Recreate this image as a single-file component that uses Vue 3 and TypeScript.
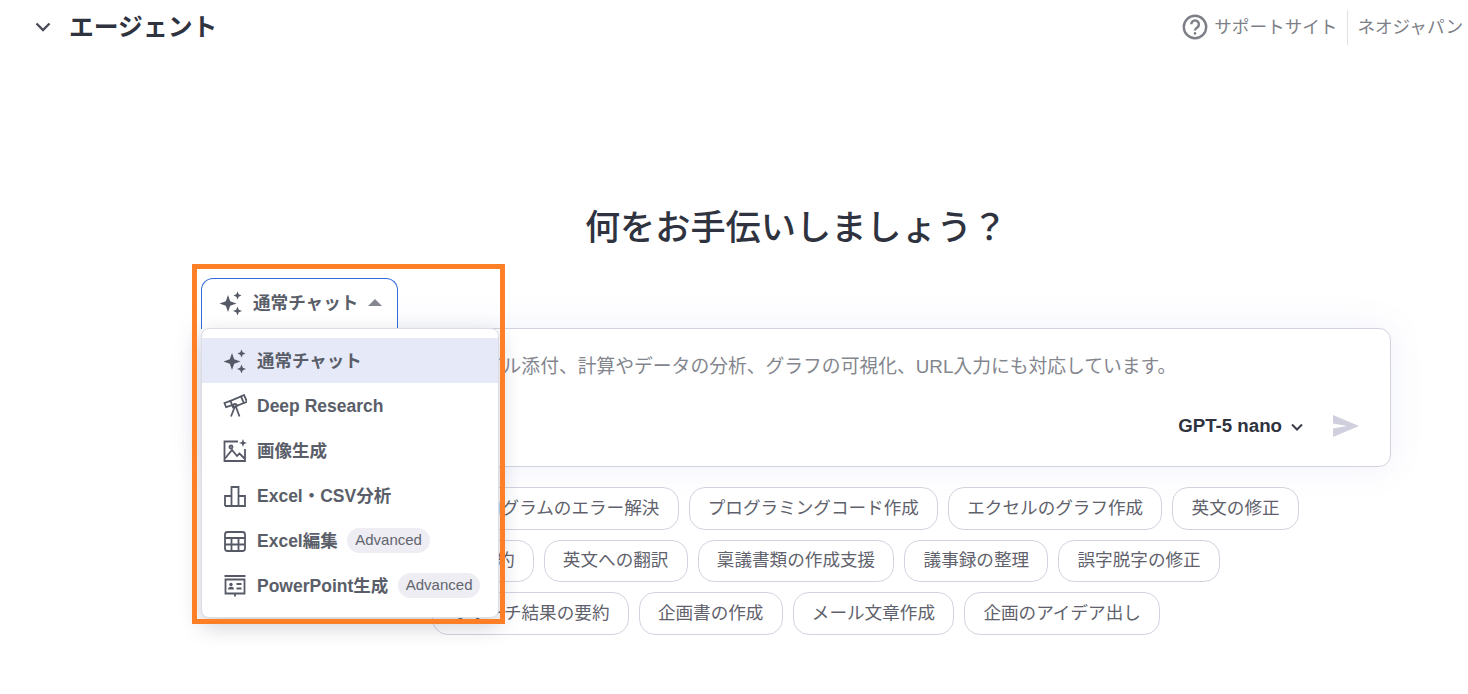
<script setup lang="ts">
const rows: string[][] = [
  ['メール返信案', 'プログラムのエラー解決', 'プログラミングコード作成', 'エクセルのグラフ作成', '英文の修正'],
  ['長文の文章要約', '英文への翻訳', '稟議書類の作成支援', '議事録の整理', '誤字脱字の修正'],
  ['リサーチ結果の要約', '企画書の作成', 'メール文章作成', '企画のアイデア出し'],
]
</script>

<template>
  <div class="page">
    <header class="top">
      <div class="top-left">
        <svg class="chev" viewBox="0 0 16 16"><path d="M1.500 4.500 8 11 14.500 4.500" /></svg>
        <h1>エージェント</h1>
      </div>
      <div class="top-right">
        <svg class="help" viewBox="0 0 26 26">
          <circle cx="13" cy="13" r="11.200" />
          <path d="M9.300 10.300a3.800 3.800 0 1 1 5.900 3.100c-1.300.9-2.200 1.500-2.200 3" />
          <circle class="dot" cx="13" cy="19.400" r="1.300" />
        </svg>
        <span class="link">サポートサイト</span>
        <span class="divider"></span>
        <span class="link company">ネオジャパン</span>
      </div>
    </header>

    <main class="main">
      <h2>何をお手伝いしましょう？</h2>

      <div class="composer">
        <button class="tab">
          <svg class="ic" viewBox="0 0 24 24"><path class="fill" d="M9 4 11.200 10.300 17.500 12.500 11.200 14.700 9 21 6.800 14.700 .5 12.500 6.800 10.300ZM18.500 0.500 19.700 3.300 22.500 4.500 19.700 5.700 18.500 8.500 17.300 5.700 14.500 4.500 17.300 3.300ZM18.500 15.500 19.800 18.700 23 20 19.800 21.300 18.500 24.500 17.200 21.300 14 20 17.200 18.700Z" /></svg>
          <span>通常チャット</span>
          <span class="caret"></span>
        </button>

        <div class="card">
          <p class="placeholder">質問を入力してください。ファイル添付、計算やデータの分析、グラフの可視化、URL入力にも対応しています。</p>
          <div class="card-foot">
            <span class="model">GPT-5 nano</span>
            <svg class="model-chev" viewBox="0 0 16 16"><path d="M3 5.500 8 10.500 13 5.500" /></svg>
            <svg class="send" viewBox="0 0 28 24"><path d="M1 1 27 12 1 23 1 14.500 15 12 1 9.500Z" /></svg>
          </div>
        </div>

        <div class="chips">
          <div v-for="(row, i) in rows" :key="i" class="chip-row">
            <span v-for="chip in row" :key="chip" class="chip">{{ chip }}</span>
          </div>
        </div>

        <div class="menu">
          <div class="item active">
            <svg class="ic" viewBox="0 0 24 24"><path class="fill" d="M9 4 11.200 10.300 17.500 12.500 11.200 14.700 9 21 6.800 14.700 .5 12.500 6.800 10.300ZM18.500 0.500 19.700 3.300 22.500 4.500 19.700 5.700 18.500 8.500 17.300 5.700 14.500 4.500 17.300 3.300ZM18.500 15.500 19.800 18.700 23 20 19.800 21.300 18.500 24.500 17.200 21.300 14 20 17.200 18.700Z" /></svg>
            <span>通常チャット</span>
          </div>
          <div class="item">
            <svg class="ic line" viewBox="0 0 24 24">
              <path d="M7.500 6.800 18 2.500l2.800 6.500-10.800 4.300Z" />
              <path d="M18 2.500 21 1l3 6.800-3.200 1.200" />
              <path d="M7.500 6.800 1.500 9l1.600 4.200 6.900-2.300" />
              <path d="M11.500 13.500 8 22.500M13 13l3.500 9.500" />
              <circle cx="12" cy="11.500" r="1.700" />
            </svg>
            <span>Deep Research</span>
          </div>
          <div class="item">
            <svg class="ic line" viewBox="0 0 24 24">
              <path d="M15 2.500H1.500v19.500H22V10" />
              <path d="M2 19.500 9 11l5 6 2.500-2.500L21.500 19.500" />
              <circle cx="8" cy="8" r="1.500" />
              <path class="fill" d="M20 0l1.100 2.900L24 4l-2.900 1.100L20 8l-1.100-2.900L16 4l2.900-1.100Z" />
            </svg>
            <span>画像生成</span>
          </div>
          <div class="item">
            <svg class="ic line" viewBox="0 0 24 24">
              <path d="M2 22V12h6.500v10M8.500 22V3h7v19M15.500 22V12H22v10ZM2 22h20" />
            </svg>
            <span>Excel・CSV分析</span>
          </div>
          <div class="item">
            <svg class="ic line" viewBox="0 0 24 24">
              <rect x="2" y="3" width="20" height="19" rx="2.500" />
              <path d="M2 9h20M2 15.500h20M8.500 9v13M15.500 9v13" />
            </svg>
            <span>Excel編集</span>
            <span class="badge">Advanced</span>
          </div>
          <div class="item">
            <svg class="ic line" viewBox="0 0 24 24">
              <path d="M1.500 2h21M2.500 5.500h19v14h-19ZM12 19.500v3" />
              <circle class="fill" cx="8" cy="10.500" r="1.700" />
              <path class="fill" d="M5 15.500c0-2 1.300-2.700 3-2.700s3 .7 3 2.700Z" />
              <path d="M13.500 10h5M13.500 14.500h5" />
            </svg>
            <span>PowerPoint生成</span>
            <span class="badge">Advanced</span>
          </div>
        </div>

        <div class="annotation"></div>
      </div>
    </main>
  </div>
</template>

<style scoped>
.page {
  width: 1468px;
  height: 694px;
  overflow: hidden;
  background: #fff;
  font-family: "Liberation Sans", "Noto Sans CJK JP", sans-serif;
  color: #2f3340;
}
.top {
  display: flex;
  justify-content: space-between;
  align-items: center;
  height: 54px;
}
.top-left {
  display: flex;
  align-items: center;
  padding-left: 35px;
}
.chev {
  width: 16px;
  height: 16px;
  margin-right: 18px;
  fill: none;
  stroke: #4b4e5a;
  stroke-width: 2.400;
}
h1 {
  margin: 2px 0 0;
  font-size: 24.800px;
  font-weight: 700;
  line-height: 30px;
}
.top-right {
  display: flex;
  align-items: center;
  padding-right: 5px;
  white-space: nowrap;
}
.help {
  width: 26px;
  height: 26px;
  margin-right: 6px;
  fill: none;
  stroke: #7d7f87;
  stroke-width: 2.400;
}
.help .dot {
  fill: #7d7f87;
  stroke: none;
}
.link {
  font-size: 17.600px;
  line-height: 24px;
  color: #7d7f87;
}
.divider {
  width: 1px;
  height: 35px;
  margin: 0 9px 0 10px;
  background: #e2e2e6;
}
.main {
  width: 1190px;
  margin-left: 201px;
}
h2 {
  margin: 0;
  padding-top: 152px;
  height: 224px;
  box-sizing: border-box;
  font-size: 35.200px;
  font-weight: 500;
  line-height: 44px;
  text-align: center;
  color: #2f3340;
}
.composer {
  position: relative;
}
.tab {
  display: flex;
  align-items: center;
  gap: 10px;
  box-sizing: border-box;
  width: 197px;
  height: 51px;
  margin-bottom: -1px;
  padding: 0 0 3px 17px;
  background: #fff;
  border: 1px solid #2f6bdc;
  border-bottom: none;
  border-radius: 12px 12px 0 0;
  font: inherit;
  font-size: 17.600px;
  font-weight: 700;
  line-height: 24px;
  color: #5a5e69;
  position: relative;
  z-index: 1;
}
.ic {
  flex: none;
  width: 24px;
  height: 24px;
}
.fill {
  fill: #565a66;
  stroke: none;
}
.line {
  fill: none;
  stroke: #565a66;
  stroke-width: 1.800;
}
.caret {
  width: 0;
  height: 0;
  border-left: 7px solid transparent;
  border-right: 7px solid transparent;
  border-bottom: 7px solid #85878f;
}
.card {
  box-sizing: border-box;
  height: 139px;
  padding: 26px 30px 0 20px;
  background: #fff;
  border: 1px solid #d3d3e0;
  border-radius: 12px;
  box-shadow: 0 0 36px rgba(90, 100, 210, 0.09);
}
.placeholder {
  margin: 0;
  font-size: 18.800px;
  line-height: 24px;
  color: #84868e;
  white-space: nowrap;
}
.card-foot {
  display: flex;
  justify-content: flex-end;
  align-items: center;
  margin-top: 35px;
}
.model {
  font-size: 18.700px;
  font-weight: 700;
  line-height: 24px;
  color: #2f3340;
}
.model-chev {
  width: 16px;
  height: 16px;
  margin: 1px 0 0 7px;
  fill: none;
  stroke: #3c3f4a;
  stroke-width: 2;
}
.send {
  width: 28px;
  height: 24px;
  margin-left: 27px;
  fill: #cfcfdd;
}
.chips {
  display: flex;
  flex-direction: column;
  gap: 10px;
  margin-top: 20px;
}
.chip-row {
  display: flex;
  justify-content: center;
  gap: 10px;
}
.chip {
  box-sizing: border-box;
  height: 42.500px;
  padding: 0 18.200px 1px;
  display: flex;
  align-items: center;
  background: #fff;
  border: 1px solid #d3d3e0;
  border-radius: 16px;
  font-size: 17.600px;
  line-height: 24px;
  color: #5f626c;
  white-space: nowrap;
}
.menu {
  position: absolute;
  z-index: 2;
  left: 0;
  top: 50px;
  box-sizing: border-box;
  width: 298px;
  height: 290px;
  padding: 9px 0 11px;
  background: #fff;
  border: 1px solid #dcdce4;
  border-radius: 8px;
  box-shadow: 0 8px 22px rgba(30, 30, 60, 0.22);
}
.item {
  display: flex;
  align-items: center;
  box-sizing: border-box;
  height: 45px;
  padding: 1px 0 0 21px;
  font-size: 17.500px;
  font-weight: 700;
  line-height: 24px;
  color: #5a5e69;
  white-space: nowrap;
}
.item .ic {
  margin: -1px 10px 0 0;
}
.item.active {
  background: #e6e9f7;
}
.badge {
  margin: -2px 0 0 9.500px;
  padding: 0 8px;
  height: 25px;
  line-height: 24px;
  border-radius: 13px;
  background: #ededf3;
  font-size: 15px;
  font-weight: 400;
  color: #62656f;
}
.annotation {
  position: absolute;
  z-index: 3;
  left: -9px;
  top: -14px;
  box-sizing: border-box;
  width: 313px;
  height: 360px;
  border: 5px solid #ff7f27;
  pointer-events: none;
}
</style>

<style>
body {
  margin: 0;
}
</style>
